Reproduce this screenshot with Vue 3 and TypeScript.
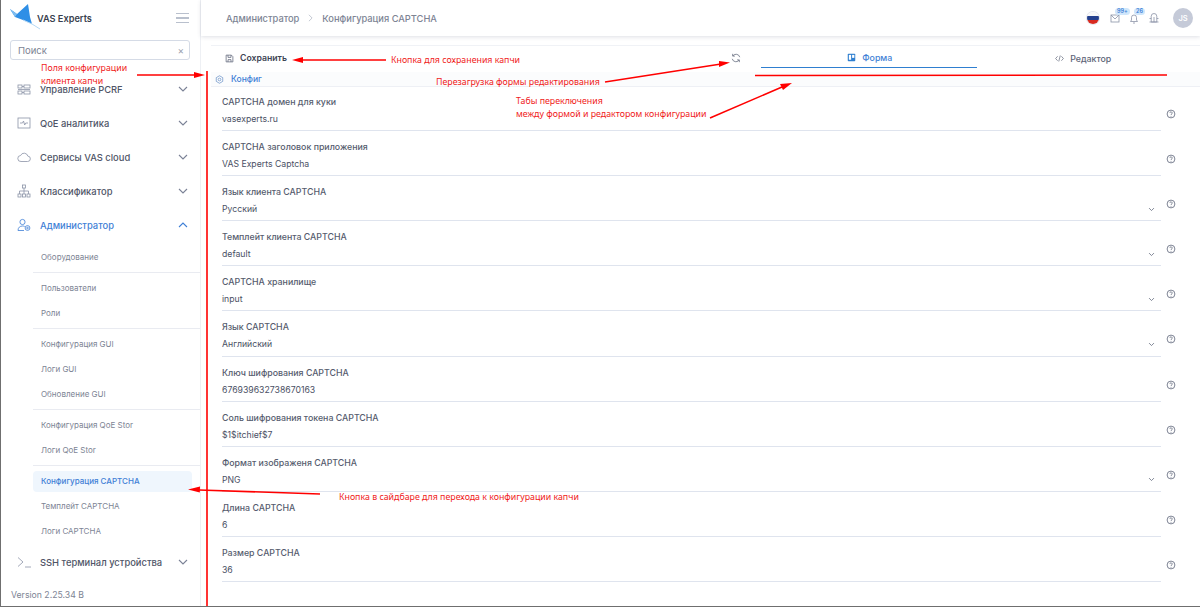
<script setup lang="ts">
interface Field { label: string; value: string; select?: boolean }
interface SubItem { label: string; active?: boolean; divider?: boolean }

const fields: Field[] = [
  { label: 'CAPTCHA домен для куки', value: 'vasexperts.ru' },
  { label: 'CAPTCHA заголовок приложения', value: 'VAS Experts Captcha' },
  { label: 'Язык клиента CAPTCHA', value: 'Русский', select: true },
  { label: 'Темплейт клиента CAPTCHA', value: 'default', select: true },
  { label: 'CAPTCHA хранилище', value: 'input', select: true },
  { label: 'Язык CAPTCHA', value: 'Английский', select: true },
  { label: 'Ключ шифрования CAPTCHA', value: '676939632738670163' },
  { label: 'Соль шифрования токена CAPTCHA', value: '$1$itchief$7' },
  { label: 'Формат изображеня CAPTCHA', value: 'PNG', select: true },
  { label: 'Длина CAPTCHA', value: '6' },
  { label: 'Размер CAPTCHA', value: '36' },
]

const subItems: SubItem[] = [
  { label: 'Оборудование', divider: true },
  { label: 'Пользователи' },
  { label: 'Роли', divider: true },
  { label: 'Конфигурация GUI' },
  { label: 'Логи GUI' },
  { label: 'Обновление GUI', divider: true },
  { label: 'Конфигурация QoE Stor' },
  { label: 'Логи QoE Stor', divider: true },
  { label: 'Конфигурация CAPTCHA', active: true },
  { label: 'Темплейт CAPTCHA' },
  { label: 'Логи CAPTCHA' },
]
</script>

<template>
  <div class="page">
    <aside class="sidebar">
      <div class="brand">
        <svg class="logo" viewBox="0 0 30 30">
          <path d="M0 5 L7 10 L18 0 L20 13 L22 20 L13 16 L5 13 Z" fill="#2f8fe6" />
          <path d="M0 5 L7 10 L5 13 Z" fill="#7fbdf0" />
          <path d="M13 16 L22 20 L30 25" stroke="#b5d8f4" stroke-width="1" fill="none" />
        </svg>
        <span class="brand-name">VAS Experts</span>
        <span class="burger"><i></i><i></i><i></i></span>
      </div>
      <div class="search">
        <span>Поиск</span>
        <span class="clear">×</span>
      </div>
      <nav class="nav">
        <div class="item">
          <svg class="ico" viewBox="0 0 14 14" fill="none" stroke="#8b93a7" stroke-width=".8"><rect x="1" y="3" width="4" height="3" /><rect x="7" y="3" width="6" height="3" /><rect x="1" y="9" width="4" height="3" /><rect x="7" y="9" width="6" height="3" /><path d="M5 4.500h2M5 10.500h2M1 7.500h12" /></svg>
          <span class="item-label">Управление PCRF</span>
          <svg class="chev" viewBox="0 0 10 6"><path d="M1 1l4 4 4-4" /></svg>
        </div>
        <div class="item">
          <svg class="ico" viewBox="0 0 14 14" fill="none" stroke="#8b93a7" stroke-width=".8"><rect x="1" y="2" width="12" height="10" /><path d="M3 7h2.500l1-2 1.200 4 1-2H11" /></svg>
          <span class="item-label">QoE аналитика</span>
          <svg class="chev" viewBox="0 0 10 6"><path d="M1 1l4 4 4-4" /></svg>
        </div>
        <div class="item">
          <svg class="ico" viewBox="0 0 14 14" fill="none" stroke="#8b93a7" stroke-width=".8"><path d="M4 11.500h6.500a2.700 2.700 0 0 0 .3-5.400A3.800 3.800 0 0 0 3.600 5.500 3 3 0 0 0 4 11.500z" /></svg>
          <span class="item-label">Сервисы VAS cloud</span>
          <svg class="chev" viewBox="0 0 10 6"><path d="M1 1l4 4 4-4" /></svg>
        </div>
        <div class="item">
          <svg class="ico" viewBox="0 0 14 14" fill="none" stroke="#8b93a7" stroke-width=".8"><rect x="5.500" y="1" width="3" height="3" /><rect x="1" y="10" width="3" height="3" /><rect x="5.500" y="10" width="3" height="3" /><rect x="10" y="10" width="3" height="3" /><path d="M7 4v6M2.500 10V7h9v3" /></svg>
          <span class="item-label">Классификатор</span>
          <svg class="chev" viewBox="0 0 10 6"><path d="M1 1l4 4 4-4" /></svg>
        </div>
        <div class="item open">
          <svg class="ico" viewBox="0 0 14 14" fill="none" stroke="#3f7fd6" stroke-width=".8"><circle cx="5.500" cy="4" r="2.600" /><path d="M1 12.500c0-3 2-4.500 4.500-4.500 1 0 1.600.2 2.200.5M1 12.500h6" /><circle cx="10.500" cy="10" r="2.400" /><circle cx="10.500" cy="10" r=".8" /></svg>
          <span class="item-label">Администратор</span>
          <svg class="chev" viewBox="0 0 10 6"><path d="M1 5l4-4 4 4" /></svg>
        </div>
        <div class="subs">
          <template v-for="s in subItems" :key="s.label">
            <div class="sub" :class="{ active: s.active }">{{ s.label }}</div>
            <div v-if="s.divider" class="sub-div"></div>
          </template>
        </div>
        <div class="item ssh">
          <svg class="ico" viewBox="0 0 14 14" fill="none" stroke="#8b93a7" stroke-width=".8"><path d="M1 2.500l5 4.500-5 4.500M8 12h6" /></svg>
          <span class="item-label">SSH терминал устройства</span>
          <svg class="chev" viewBox="0 0 10 6"><path d="M1 1l4 4 4-4" /></svg>
        </div>
      </nav>
      <div class="version">Version 2.25.34 B</div>
    </aside>

    <main class="main">
      <header class="topbar">
        <span class="crumb">Администратор</span>
        <svg class="crumb-sep" viewBox="0 0 6 10"><path d="M1 1l4 4-4 4" /></svg>
        <span class="crumb">Конфигурация CAPTCHA</span>
        <div class="top-icons">
          <span class="flag"><i class="w"></i><i class="b"></i><i class="r"></i></span>
          <span class="tool mail">
            <svg viewBox="0 0 12 12" fill="none" stroke="#8b93a7" stroke-width=".8"><rect x="1" y="3" width="8" height="7" /><path d="M1 3l4 4 4-4" /></svg>
            <em>99+</em>
          </span>
          <span class="tool bell">
            <svg viewBox="0 0 12 12" fill="none" stroke="#8b93a7" stroke-width=".8"><path d="M1.500 9.500h7L7.500 8V5.500a2.500 2.500 0 0 0-5 0V8zM4 11h2" /></svg>
            <em>26</em>
          </span>
          <span class="tool bug">
            <svg viewBox="0 0 12 12" fill="none" stroke="#8b93a7" stroke-width=".8"><path d="M6 1.500a2.800 2.800 0 0 0-2.800 2.800V10h5.600V4.300A2.800 2.800 0 0 0 6 1.500zM1.500 10h9M1.500 6.500h1.700M8.800 6.500h1.700M6 5v5" /></svg>
          </span>
          <span class="avatar">JS</span>
        </div>
      </header>

      <section class="content">
        <div class="toolbar">
          <div class="save">
            <svg viewBox="0 0 12 12" fill="none" stroke="#5d6478" stroke-width="1"><path d="M1.500 1.500h7l2 2v7h-9z" /><path d="M4 1.500v3h4v-3M4 10.500v-3h4v3" /></svg>
            <span>Сохранить</span>
          </div>
          <svg class="reload" viewBox="0 0 12 12" fill="none" stroke="#5d6478" stroke-width=".9"><path d="M10.500 5A4.600 4.600 0 0 0 2.300 3.400M1.500 7a4.600 4.600 0 0 0 8.200 1.600" /><path d="M2 1v2.700h2.700M10 11V8.300H7.300" /></svg>
          <div class="tabs">
            <div class="tab on">
              <svg viewBox="0 0 12 12"><rect x="1" y="1" width="10" height="10" rx="1" fill="#2f7fd0" /><rect x="2.500" y="2.500" width="3" height="6.500" fill="#fff" /><rect x="6.800" y="2.500" width="3" height="4" fill="#fff" /></svg>
              <span>Форма</span>
            </div>
            <div class="tab">
              <svg viewBox="0 0 12 12" fill="none" stroke="#5d6478" stroke-width=".9"><path d="M3.500 3L.8 6l2.700 3M8.500 3l2.700 3-2.700 3M7 2L5 10" /></svg>
              <span>Редактор</span>
            </div>
          </div>
        </div>
        <div class="section-title">
          <svg viewBox="0 0 12 12" fill="none" stroke="#5e88c4" stroke-width=".9"><path d="M6 1l4.300 2.500v5L6 11 1.700 8.500v-5z" /><circle cx="6" cy="6" r="1.800" /></svg>
          <span>Конфиг</span>
        </div>
        <div class="fields">
          <div v-for="f in fields" :key="f.label" class="field-row">
            <div class="field">
              <div class="f-label">{{ f.label }}</div>
              <div class="f-value">
                <span>{{ f.value }}</span>
                <svg v-if="f.select" class="f-chev" viewBox="0 0 10 6"><path d="M1.500 1L5 4.500 8.500 1" /></svg>
              </div>
            </div>
            <svg class="help" viewBox="0 0 10 10" fill="none" stroke="#5d6478" stroke-width=".8"><circle cx="5" cy="5" r="3.900" /><path d="M3.800 4a1.200 1.200 0 1 1 1.800 1.100c-.4.300-.6.500-.6 1M5 7v.7" /></svg>
          </div>
        </div>
      </section>
    </main>

    <svg class="notes-lines" width="1200" height="607" viewBox="0 0 1200 607" fill="none">
      <g stroke="#f00" stroke-width="1.600">
        <path d="M207 71V607" />
        <path d="M137 75H196" />
        <path d="M755 75.500L1167 75" />
        <path d="M386 60H300" />
        <path d="M605 82L721 64" />
        <path d="M710 118L782 87" />
        <path d="M320 494L199 490" />
      </g>
      <g fill="#f00">
        <path d="M205 75L194 72V78z" />
        <path d="M292 60L303 57V63z" />
        <path d="M730 62.500L719 61V67z" />
        <path d="M792 83L780 84L783 90z" />
        <path d="M188 489.500L200 486.500L199.800 492.500z" />
      </g>
    </svg>
    <div class="note n1">Поля конфигурации<br />клиента капчи</div>
    <div class="note n2">Кнопка для сохранения капчи</div>
    <div class="note n3">Перезагрузка формы редактирования</div>
    <div class="note n4">Табы переключения<br />между формой и редактором конфигурации</div>
    <div class="note n5">Кнопка в сайдбаре для перехода к конфигурации капчи</div>
  </div>
</template>

<style>
html, body { margin: 0; padding: 0; background: #fff; }
</style>

<style scoped>
.page {
  position: relative;
  display: flex;
  width: 1200px;
  height: 607px;
  overflow: hidden;
  box-sizing: border-box;
  border-left: 1px solid #6f6f6f;
  border-bottom: 1px solid #6f6f6f;
  font-family: Inter, "Noto Sans", sans-serif;
  color: #4a5064;
  background: #fff;
}
.sidebar {
  width: 200px;
  flex: none;
  display: flex;
  flex-direction: column;
  border-right: 1px solid #eef0f4;
  box-sizing: border-box;
}
.brand {
  height: 36px;
  display: flex;
  align-items: center;
  padding: 0 11px 0 9px;
  flex: none;
}
.logo { width: 30px; height: 30px; flex: none; margin-top: 2px; }
.brand-name {
  margin-left: -3px;
  font-size: 9.200px;
  font-weight: 600;
  color: #3a3f4e;
}
.burger {
  margin-left: auto;
  width: 13px;
  display: flex;
  flex-direction: column;
  gap: 3px;
}
.burger i { height: 1.500px; background: #b9c0cd; display: block; }
.search {
  margin: 4px 10px 0 9px;
  height: 20px;
  box-sizing: border-box;
  border: 1px solid #d5dbe6;
  border-radius: 3px;
  display: flex;
  align-items: center;
  justify-content: space-between;
  padding: 0 5px 0 7px;
  font-size: 9.500px;
  color: #7d8494;
  flex: none;
}
.clear { font-size: 10px; color: #9aa1ae; }
.nav { margin-top: 12px; flex: 1; }
.item {
  height: 34px;
  display: flex;
  align-items: center;
  padding: 0 12px 0 16px;
  box-sizing: border-box;
}
.ico { width: 14px; height: 14px; flex: none; }
.item-label {
  margin-left: 9px;
  font-size: 9.400px;
  font-weight: 500;
  color: #4f5567;
}
.chev {
  margin-left: auto;
  width: 10px;
  height: 6px;
  fill: none;
  stroke: #7b8296;
  stroke-width: 1.100;
}
.open .item-label { color: #3f7fd6; }
.open .chev { stroke: #3f7fd6; }
.subs { padding-left: 32px; padding-top: 2.500px; }
.sub {
  height: 25px;
  line-height: 25px;
  font-size: 8px;
  color: #7d8494;
  padding-left: 8px;
  margin-right: 8px;
}
.sub.active {
  height: 21px;
  line-height: 21px;
  margin: 5px 8px 2px 0;
  background: #eff6fd;
  border-radius: 4px;
  color: #3f7fd6;
  font-weight: 500;
}
.sub-div {
  height: 1px;
  background: #e9ebf1;
  margin-top: 2px;
  margin-bottom: 3px;
}
.ssh { margin-top: 1.500px; }
.version {
  height: 15px;
  flex: none;
  font-size: 8.700px;
  color: #7d8494;
  padding-left: 10px;
  margin-bottom: 1px;
}
.main {
  flex: 1;
  min-width: 0;
  display: flex;
  flex-direction: column;
}
.topbar {
  height: 36px;
  flex: none;
  display: flex;
  align-items: center;
  padding: 0 7px 0 25px;
  box-shadow: 0 1px 4px rgba(70, 80, 110, .18);
  font-size: 9.300px;
  color: #7d8494;
  font-weight: 500;
}
.crumb-sep {
  width: 5px;
  height: 8px;
  margin: 0 9px;
  fill: none;
  stroke: #b5bbc8;
}
.top-icons {
  margin-left: auto;
  display: flex;
  align-items: center;
}
.flag {
  width: 12px;
  height: 12px;
  border-radius: 50%;
  overflow: hidden;
  display: flex;
  flex-direction: column;
  box-shadow: 0 0 0 1px #e5e7ee;
  margin-right: 11px;
}
.flag i { flex: 1; display: block; }
.flag .w { background: #f7f7f9; }
.flag .b { background: #24408e; }
.flag .r { background: #d82a20; }
.tool { position: relative; width: 12px; height: 12px; display: block; margin-right: 7px; }
.tool svg { width: 12px; height: 12px; display: block; }
.tool em {
  position: absolute;
  top: -4px;
  left: 5px;
  font-style: normal;
  font-size: 5.500px;
  line-height: 7px;
  padding: 0 2px;
  border-radius: 4px;
  background: #cfe6fb;
  color: #3f7fd6;
  font-weight: 600;
}
.bug { margin-right: 13px; }
.avatar {
  width: 20px;
  height: 20px;
  border-radius: 50%;
  background: #c5cad8;
  color: #fff;
  font-size: 7.500px;
  font-weight: 600;
  display: flex;
  align-items: center;
  justify-content: center;
}
.content {
  flex: 1;
  padding-top: 9px;
  padding-left: 10px;
  min-height: 0;
}
.toolbar {
  height: 27px;
  border-top: 1px solid #f0f2f6;
  box-sizing: border-box;
  display: flex;
  align-items: center;
  position: relative;
}
.save {
  display: flex;
  align-items: center;
  gap: 6px;
  margin-left: 14px;
  margin-top: -2px;
  font-size: 8.700px;
  font-weight: 600;
  color: #3e4454;
}
.save svg { width: 9px; height: 9px; }
.reload { width: 10px; height: 10px; margin-left: auto; margin-right: 20px; margin-top: -2px; }
.tabs { display: flex; width: 429px; margin-right: 10px; height: 100%; }
.tab {
  flex: 1;
  display: flex;
  align-items: center;
  justify-content: center;
  gap: 6px;
  font-size: 8.800px;
  font-weight: 500;
  color: #5d6478;
  box-sizing: border-box;
  padding-bottom: 2px;
}
.tab svg { width: 9px; height: 9px; }
.tab.on { color: #3f7fd6; height: 22px; padding: 2px 0 0 2px; border-bottom: 1.500px solid #2f7fd0; }
.section-title {
  height: 15px;
  box-sizing: border-box;
  display: flex;
  align-items: center;
  gap: 7px;
  padding-left: 4px;
  font-size: 8.500px;
  font-weight: 500;
  color: #3f7fd6;
  background: #fbfcfd;
  border-bottom: 1px solid #eef0f5;
}
.section-title svg { width: 9px; height: 9px; }
.fields { padding: 8px 0 0 11px; }
.field-row {
  height: 45.100px;
  display: flex;
  align-items: flex-start;
}
.field {
  width: 939px;
  height: 35.100px;
  border-bottom: 1px solid #dfe4ee;
  box-sizing: content-box;
}
.f-label { font-size: 8.800px; line-height: 14px; color: #565c6e; font-weight: 500; }
.f-value {
  margin-top: 3px;
  height: 14px;
  display: flex;
  align-items: center;
  justify-content: space-between;
  font-size: 8.700px;
  color: #4a5064;
  padding-right: 6px;
}
.f-chev {
  width: 7px;
  height: 5px;
  fill: none;
  stroke: #5d6478;
  stroke-width: 1.100;
}
.help { width: 10px; height: 10px; margin-left: 5px; margin-top: 14px; }
.notes-lines {
  position: absolute;
  left: -1px;
  top: 0;
  pointer-events: none;
}
.note {
  position: absolute;
  color: #f01a1a;
  font-family: "Noto Sans", sans-serif;
  font-size: 8.800px;
  line-height: 13px;
  white-space: nowrap;
}
.n1 { left: 40px; top: 62px; }
.n2 { left: 390px; top: 54px; }
.n3 { left: 435px; top: 76px; }
.n4 { left: 515px; top: 95px; }
.n5 { left: 338px; top: 491px; }
</style>
